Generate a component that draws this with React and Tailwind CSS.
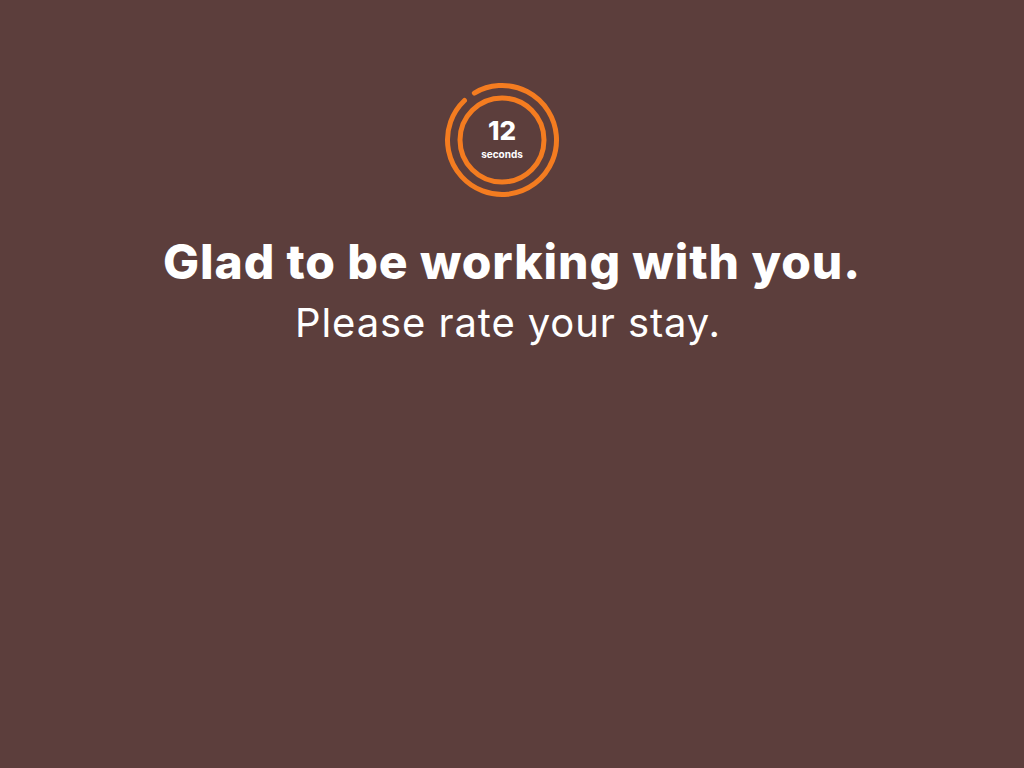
import React from 'react';

function Timer({ seconds }) {
  return (
    <div className="relative w-[120px] h-[120px]">
      <svg width="120" height="120" viewBox="0 0 120 120" className="absolute inset-0">
        <path
          d="M32.34 13.04 A54.5 54.5 0 1 1 22.48 20.47"
          fill="none"
          stroke="#f47c20"
          strokeWidth="5"
          strokeLinecap="round"
        />
        <circle cx="60" cy="60" r="42" fill="none" stroke="#f47c20" strokeWidth="5" />
      </svg>
      <div className="absolute inset-0 flex flex-col items-center justify-center text-white">
        <div className="text-[26px] leading-none font-extrabold mt-[-4px]">{seconds}</div>
        <div className="text-[10px] leading-none font-bold mt-[5px]">seconds</div>
      </div>
    </div>
  );
}

export default function App() {
  return (
    <div
      className="w-full h-screen bg-[#5c3e3c] flex flex-col items-center text-white"
      style={{ fontFamily: 'Inter, "Noto Sans", sans-serif' }}
    >
      <div className="mt-[80px] mr-[20px]">
        <Timer seconds={12} />
      </div>
      <h1 className="mt-[34px] text-[48px] leading-[56px] font-extrabold tracking-[0.9px]">
        Glad to be working with you.
      </h1>
      <p className="mt-[10px] mr-[8px] text-[40px] leading-[46px] font-normal tracking-[0.9px]">
        Please rate your stay.
      </p>
    </div>
  );
}
